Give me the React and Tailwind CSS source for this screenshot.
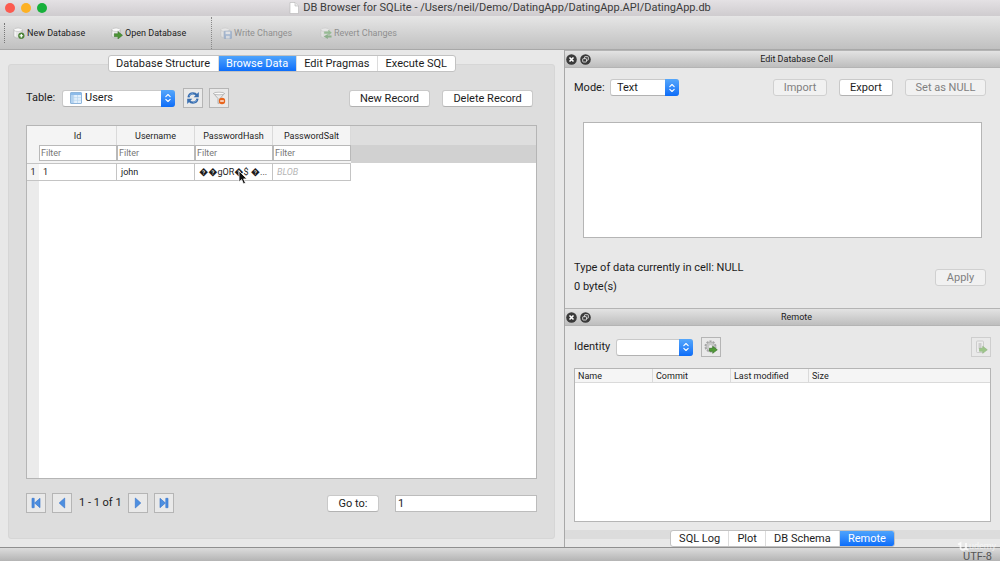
import { useState } from 'react';

const COLUMNS = ['Id', 'Username', 'PasswordHash', 'PasswordSalt'];
const REMOTE_COLUMNS = ['Name', 'Commit', 'Last modified', 'Size'];
const MAIN_TABS = ['Database Structure', 'Browse Data', 'Edit Pragmas', 'Execute SQL'];
const DOCK_TABS = ['SQL Log', 'Plot', 'DB Schema', 'Remote'];

/* ---------- Icons ---------- */

function Cylinder() {
  return (
    <>
      <path d="M1 3v7c0 1.200 2 2 4.500 2s4.500-.8 4.500-2V3" fill="#e6e6e6" stroke="#a9a9a9" strokeWidth=".6" />
      <ellipse cx="5.500" cy="3" rx="4.500" ry="1.900" fill="#fafafa" stroke="#b5b5b5" strokeWidth=".6" />
      <path d="M2.300 5v5" stroke="#fff" strokeWidth="1" />
    </>
  );
}

function ToolIcon({ kind }) {
  return (
    <svg viewBox="0 0 13 13" className="size-3 shrink-0" aria-hidden="true">
      <Cylinder />
      {kind === 'new' && (
        <>
          <circle cx="9" cy="9.500" r="3.200" fill="#4f8a3a" stroke="#3c6b2a" strokeWidth=".5" />
          <path d="M9 7.600v3.800M7.100 9.500h3.800" stroke="#fff" strokeWidth="1.300" />
        </>
      )}
      {kind === 'open' && (
        <path d="M3.500 7.200h4V4.800l5 4.200-5 4v-2.400h-4z" fill="#4c9436" stroke="#2f6b20" strokeWidth=".5" />
      )}
      {kind === 'write' && (
        <>
          <rect x="4.500" y="4.500" width="8" height="8" rx=".6" fill="#6f98d0" stroke="#4a74b0" strokeWidth=".6" />
          <rect x="6" y="5" width="5" height="2.800" fill="#f2f5fa" />
          <rect x="6.500" y="9.500" width="4" height="3" fill="#dfe7f2" />
        </>
      )}
      {kind === 'revert' && (
        <>
          <path d="M4.500 5h4.500V3l3.800 3.200L9 9.200V7.300H4.500z" fill="#4fa04a" />
          <path d="M12.500 9.200h-4V7.500L4 10.200l4.500 2.800v-1.700h4z" fill="#3f8c3c" />
        </>
      )}
    </svg>
  );
}

function RefreshIcon() {
  return (
    <svg viewBox="0 0 14 14" className="size-3.5" aria-hidden="true">
      <g fill="none" stroke="#3a6fb0" strokeWidth="2.200">
        <path d="M2.500 6.300C2.900 3.700 4.800 2.300 7 2.300c1.500 0 2.800.6 3.700 1.800" />
        <path d="M11.500 7.700c-.4 2.600-2.300 4-4.500 4-1.500 0-2.800-.6-3.700-1.800" />
      </g>
      <path d="M12.800 1v5.200H7.700zM1.200 13V7.800h5.100z" fill="#3a6fb0" />
      <path d="M3.300 5c.7-1.500 2-2.300 3.700-2.300M10.700 9c-.7 1.500-2 2.300-3.700 2.300" fill="none" stroke="#8db4e2" strokeWidth=".7" />
    </svg>
  );
}

function ClearFilterIcon() {
  return (
    <svg viewBox="0 0 14 14" className="size-3.5" aria-hidden="true">
      <path d="M1.500 2.500 6 7.500v5l2-1v-4l4.500-5z" fill="#e9e9e9" stroke="#a3a3a3" strokeWidth=".8" />
      <ellipse cx="7" cy="2.500" rx="5.500" ry="1.300" fill="#fafafa" stroke="#a8a8a8" strokeWidth=".7" />
      <circle cx="10" cy="10" r="3.200" fill="#e8651d" />
      <path d="M8.200 10h3.600" stroke="#fff" strokeWidth="1.300" />
    </svg>
  );
}

function TableIcon() {
  return (
    <svg viewBox="0 0 12 12" className="size-3" aria-hidden="true">
      <rect x=".5" y=".5" width="11" height="11" rx=".5" fill="#e3f0fc" stroke="#8fb6dc" />
      <path d="M1 1h10v2H1z" fill="#8dbbe9" />
      <path d="M1 3h2.500v8H1z" fill="#b2d2f1" />
      <path d="M3.700 3v8M7.500 3v8M1 5.600h10M1 8.300h10" stroke="#b4d1ec" strokeWidth=".6" />
    </svg>
  );
}

function NavIcon({ kind }) {
  const flip = kind === 'next' || kind === 'last';
  const bar = kind === 'first' || kind === 'last';
  return (
    <svg viewBox="0 0 12 12" className="size-3" aria-hidden="true">
      <g transform={flip ? 'translate(12 0) scale(-1 1)' : undefined} fill="#4d8fe0" stroke="#2f6ecb" strokeWidth=".6" strokeLinejoin="round">
        {bar && <rect x="2" y="1.300" width="2.200" height="9.400" />}
        {bar ? <path d="M10 1.300v9.400L4.600 6z" /> : <path d="M8.700 1v10L3.200 6z" />}
      </g>
    </svg>
  );
}

function GearArrowIcon() {
  return (
    <svg viewBox="0 0 14 14" className="size-3.5" aria-hidden="true">
      <circle cx="6.500" cy="6.500" r="5" fill="none" stroke="#a6a6a6" strokeWidth="2" strokeDasharray="2 1.140" />
      <circle cx="6.500" cy="6.500" r="4.400" fill="#c9c9c9" stroke="#a3a3a3" strokeWidth=".6" />
      <circle cx="6.500" cy="6.500" r="1.500" fill="#eee" />
      <path d="M5.500 8.300h3.200V6.300l4.600 3.500-4.600 3.500v-2H5.500z" fill="#519b37" stroke="#2f6b20" strokeWidth=".6" />
    </svg>
  );
}

function PushIcon() {
  return (
    <svg viewBox="0 0 14 14" className="size-3.5 opacity-60" aria-hidden="true">
      <rect x="2.500" y="1" width="7" height="11.500" rx="1" fill="#efefef" stroke="#a8a8a8" strokeWidth=".7" />
      <path d="M4.500 3h3v6h-3z" fill="#bdbdbd" />
      <path d="M5.500 8.300h3.200V6.300l4.600 3.500-4.600 3.500v-2H5.500z" fill="#6cb04c" stroke="#55913b" strokeWidth=".6" />
    </svg>
  );
}

/* ---------- Shared controls ---------- */

function PushButton({ children, disabled, className = '' }) {
  return (
    <button
      disabled={disabled}
      className={`h-[17px] rounded-[3px] border pt-px text-center leading-3 whitespace-nowrap ${
        disabled ? 'border-[#d0d0d0] bg-[#f1f1f1] text-[#808080]' : 'border-[#c9c9c9] border-b-[#b2b2b2] bg-white text-[#1c1c1c]'
      } ${className}`}
    >
      {children}
    </button>
  );
}

function IconButton({ label, children, disabled }) {
  return (
    <button
      aria-label={label}
      disabled={disabled}
      className={`flex size-5 shrink-0 items-center justify-center border bg-[#e9e9e9] ${disabled ? 'border-[#cecece]' : 'border-[#b5b5b5]'}`}
    >
      {children}
    </button>
  );
}

function PopUp({ id, options, icon, className = '' }) {
  return (
    <div className={`relative h-[17px] ${className}`}>
      <select
        id={id}
        className={`block size-full appearance-none rounded-[3px] border border-[#c9c9c9] border-b-[#b2b2b2] bg-white leading-3 text-[#1c1c1c] ${icon ? 'pl-[22px]' : 'pl-1.5'}`}
      >
        {options.map((o) => (
          <option key={o}>{o}</option>
        ))}
      </select>
      {icon && <span className="pointer-events-none absolute top-0.5 left-2">{icon}</span>}
      <span className="pointer-events-none absolute inset-y-0 right-0 flex w-3.5 items-center justify-center rounded-r-[3px] bg-linear-to-b from-[#55a7fb] to-[#0a6cf8]">
        <svg viewBox="0 0 8 10" className="h-2.5 w-2" fill="none" stroke="#fff" strokeWidth="1.100" strokeLinecap="round" strokeLinejoin="round">
          <path d="M1.800 3.700 4 1.500l2.200 2.200M1.800 6.300 4 8.500l2.200-2.200" />
        </svg>
      </span>
    </div>
  );
}

function TabBar({ tabs, active, onChange, className = '' }) {
  return (
    <div role="tablist" className={`flex h-[17px] overflow-hidden rounded-[3px] border border-[#c2c2c2] bg-white ${className}`}>
      {tabs.map((t) => (
        <button
          key={t}
          role="tab"
          aria-selected={t === active}
          onClick={() => onChange(t)}
          className={`flex-auto border-r border-[#dcdcdc] pt-px leading-3 whitespace-nowrap last:border-r-0 ${
            t === active ? 'bg-linear-to-b from-[#4da3fc] to-[#0b6dfa] text-white' : 'text-[#1c1c1c]'
          }`}
        >
          {t}
        </button>
      ))}
    </div>
  );
}

function DockHeader({ title }) {
  return (
    <div className="flex h-[18px] shrink-0 items-center border-y border-[#b4b4b4] bg-linear-to-b from-[#e3e3e3] to-[#bebebe] px-px text-[9px]">
      <div className="flex w-7 gap-[3px]">
        <button aria-label={`Close ${title}`}>
          <svg viewBox="0 0 11 11" className="size-[11px]">
            <circle cx="5.500" cy="5.500" r="5.300" fill="#3a3a3a" />
            <path d="M3.500 3.500l4 4M7.500 3.500l-4 4" stroke="#fff" strokeWidth="1.600" />
          </svg>
        </button>
        <button aria-label={`Float ${title}`}>
          <svg viewBox="0 0 11 11" className="size-[11px]">
            <circle cx="5.500" cy="5.500" r="5.300" fill="#3a3a3a" />
            <g fill="#3a3a3a" stroke="#e2e2e2" strokeWidth=".9">
              <rect x="4.500" y="2.700" width="3.800" height="3.500" rx=".5" />
              <rect x="2.700" y="4.700" width="3.800" height="3.300" rx=".5" />
            </g>
          </svg>
        </button>
      </div>
      <h2 className="flex-1 pt-0.5 text-center">{title}</h2>
    </div>
  );
}

/* ---------- Window parts ---------- */

function TitleBar() {
  return (
    <header className="flex h-4 shrink-0 items-center bg-linear-to-b from-[#e4e1e4] to-[#cfcccf] px-[5px]">
      <div className="flex w-14 gap-1.5">
        <button aria-label="Close" className="size-2.5 rounded-full bg-[#fc5b50]" />
        <button aria-label="Minimize" className="size-2.5 rounded-full bg-[#fdb124]" />
        <button aria-label="Zoom" className="size-2.5 rounded-full bg-[#17b03b]" />
      </div>
      <h1 className="flex flex-1 items-center justify-center gap-1 pr-14 text-[11px] leading-4 text-[#3b3b3b]">
        <svg viewBox="0 0 10 12" className="h-3 w-2.5" aria-hidden="true">
          <path d="M1 .5h5L9.500 4v7.500H1z" fill="#fff" stroke="#b5b5b5" strokeWidth=".6" />
          <path d="M6 .5V4h3.500" fill="#ececec" stroke="#b5b5b5" strokeWidth=".6" />
        </svg>
        DB Browser for SQLite - /Users/neil/Demo/DatingApp/DatingApp.API/DatingApp.db
      </h1>
    </header>
  );
}

function ToolButton({ kind, label, disabled, className = '' }) {
  return (
    <button disabled={disabled} className={`flex items-center gap-0.5 whitespace-nowrap ${disabled ? 'text-[#3c3c3c] opacity-45' : ''} ${className}`}>
      <ToolIcon kind={kind} />
      <span className="pt-0.5">{label}</span>
    </button>
  );
}

function Toolbar() {
  return (
    <div className="flex h-[34px] shrink-0 items-center border-b border-[#a8a8a8] bg-linear-to-b from-[#e6e6e6] to-[#c0c0c0] pl-1 text-[9px]">
      <span className="mr-2 h-5 border-l border-dotted border-[#777]" />
      <ToolButton kind="new" label="New Database" className="w-[98px]" />
      <ToolButton kind="open" label="Open Database" className="w-[100px]" />
      <span className="mr-2 h-8 border-l border-dotted border-[#888]" />
      <ToolButton kind="write" label="Write Changes" disabled className="w-[100px]" />
      <ToolButton kind="revert" label="Revert Changes" disabled />
    </div>
  );
}

function DataGrid() {
  return (
    <div className="flex min-h-0 flex-1 flex-col border border-[#b5b5b5] bg-white text-[9px]">
      <table className="w-full table-fixed border-separate border-spacing-0">
        <colgroup>
          <col className="w-3" />
          {COLUMNS.map((c) => (
            <col key={c} className="w-[78px]" />
          ))}
          <col />
        </colgroup>
        <thead>
          <tr className="h-[19px] bg-[#f4f4f4]">
            <th />
            {COLUMNS.map((c) => (
              <th key={c} scope="col" className="border-r border-[#dadada] p-0 pt-[3px] font-normal">{c}</th>
            ))}
            <td className="bg-[#dedede]" />
          </tr>
          <tr className="h-[18px] bg-[#f4f4f4]">
            <td />
            {COLUMNS.map((c) => (
              <td key={c} className="p-0 align-top">
                <input
                  aria-label={`Filter ${c}`}
                  placeholder="Filter"
                  className="block h-4 w-full border border-[#b9b9b9] bg-white px-px leading-3 placeholder:text-[#777]"
                />
              </td>
            ))}
            <td className="bg-[#d1d1d1]" />
          </tr>
        </thead>
        <tbody>
          <tr className="h-[18px]">
            <th scope="row" className="border-y border-[#c4c4c4] bg-[#f4f4f4] p-0 pt-0.5 font-normal">1</th>
            <td className="border-y border-r border-[#c4c4c4] p-0 pt-0.5 pl-1">1</td>
            <td className="border-y border-r border-[#c4c4c4] p-0 pt-0.5 pl-1">john</td>
            <td className="border-y border-r border-[#c4c4c4] p-0 pt-0.5 pl-1 whitespace-nowrap">��gOR�$ �...</td>
            <td className="border-y border-r border-[#c4c4c4] p-0 pt-0.5 pl-1 text-[#b5b5b5] italic">BLOB</td>
            <td />
          </tr>
        </tbody>
      </table>
      <div className="w-3 flex-1 bg-[#ebebeb]" />
    </div>
  );
}

function BrowsePane() {
  const [tab, setTab] = useState('Browse Data');
  return (
    <main className="flex min-h-0 flex-col pt-[5px] pr-[9px] pb-2 pl-2">
      <TabBar tabs={MAIN_TABS} active={tab} onChange={setTab} className="z-10 w-[348px] shrink-0 self-center" />
      <section className="-mt-2 flex min-h-0 flex-1 flex-col rounded-[3px] border border-[#d6d6d6] bg-[#dddddd] px-[17px] pt-[23px] pb-[25px]">
        <div className="mb-[17px] flex items-center">
          <label htmlFor="table" className="w-9 pt-px">Table:</label>
          <PopUp id="table" options={['Users']} icon={<TableIcon />} className="mr-2 w-[113px]" />
          <div className="flex gap-1.5">
            <IconButton label="Refresh"><RefreshIcon /></IconButton>
            <IconButton label="Clear filters"><ClearFilterIcon /></IconButton>
          </div>
          <div className="mr-1 ml-auto flex gap-3">
            <PushButton className="w-[81px]">New Record</PushButton>
            <PushButton className="w-[91px]">Delete Record</PushButton>
          </div>
        </div>
        <DataGrid />
        <div className="mt-3.5 flex items-center">
          <div className="flex items-center gap-1.5">
            <IconButton label="First page"><NavIcon kind="first" /></IconButton>
            <IconButton label="Previous page"><NavIcon kind="prev" /></IconButton>
            <span className="pt-px pl-px">1 - 1 of 1</span>
            <IconButton label="Next page"><NavIcon kind="next" /></IconButton>
            <IconButton label="Last page"><NavIcon kind="last" /></IconButton>
          </div>
          <PushButton className="mr-4 ml-auto w-[52px]">Go to:</PushButton>
          <input aria-label="Row number" defaultValue="1" className="h-[17px] w-[142px] border border-[#bcbcbc] bg-white px-0.5" />
        </div>
      </section>
    </main>
  );
}

function EditCellDock() {
  return (
    <section className="flex min-h-0 flex-[258] flex-col">
      <DockHeader title="Edit Database Cell" />
      <div className="flex min-h-0 flex-1 flex-col pt-[11px] pr-3.5 pb-3 pl-[9px]">
        <div className="flex items-center">
          <label htmlFor="mode" className="w-9 pt-px">Mode:</label>
          <PopUp id="mode" options={['Text']} className="w-[69px]" />
          <div className="ml-auto flex gap-3">
            <PushButton disabled className="w-[54px]">Import</PushButton>
            <PushButton className="w-[54px]">Export</PushButton>
            <PushButton disabled className="w-[81px]">Set as NULL</PushButton>
          </div>
        </div>
        <textarea aria-label="Cell content" className="mt-[25px] mr-1 mb-5 ml-[9px] min-h-0 flex-1 resize-none border border-[#b5b5b5] bg-white p-1" />
        <div className="flex items-center justify-between">
          <div className="leading-[19px]">
            <p>Type of data currently in cell: NULL</p>
            <p>0 byte(s)</p>
          </div>
          <PushButton disabled className="w-[51px]">Apply</PushButton>
        </div>
      </div>
    </section>
  );
}

function RemoteDock() {
  const [tab, setTab] = useState('Remote');
  return (
    <section className="flex min-h-0 flex-[239] flex-col">
      <DockHeader title="Remote" />
      <div className="flex min-h-0 flex-1 flex-col px-[9px] pt-[11px] pb-2">
        <div className="mb-[11px] flex items-center">
          <label htmlFor="identity" className="w-[42px] pt-px">Identity</label>
          <PopUp id="identity" options={['']} className="mr-2 w-[77px]" />
          <IconButton label="Import certificate"><GearArrowIcon /></IconButton>
          <div className="ml-auto">
            <IconButton label="Push database" disabled><PushIcon /></IconButton>
          </div>
        </div>
        <div className="min-h-0 flex-1 border border-[#b5b5b5] bg-white">
          <table className="w-full table-fixed border-separate border-spacing-0 text-[9px]">
            <thead>
              <tr className="h-[14px] bg-[#f5f5f5] text-left leading-3">
                {REMOTE_COLUMNS.map((c) => (
                  <th key={c} scope="col" className="w-[78px] border-r border-b border-[#dadada] p-0 pl-[3px] font-normal last:w-auto last:border-r-0">{c}</th>
                ))}
              </tr>
            </thead>
          </table>
        </div>
      </div>
      <div className="flex justify-center bg-linear-to-b from-[#dcdcdc] from-50% to-[#e8e8e8] to-50%">
        <TabBar tabs={DOCK_TABS} active={tab} onChange={setTab} className="w-[225px]" />
      </div>
    </section>
  );
}

function StatusBar() {
  return (
    <footer className="relative flex h-3.5 shrink-0 items-center justify-end border-t border-[#8f8f8f] bg-linear-to-b from-[#dcdcdc] to-[#b4b4b4] pr-2 text-[#555]">
      <span className="pt-1 leading-3">UTF-8</span>
      <span className="absolute -top-2 right-1 flex items-center text-[9px] leading-[10px] text-white/60">
        <svg viewBox="0 0 12 12" className="size-3" fill="none" stroke="#fff" strokeOpacity=".8" strokeWidth="1.800" aria-hidden="true">
          <path d="M1 4.500 3.500 3v4.500c0 3.500 5 3 5.500-.5V3M9 7c0 2 .8 3 2.500 2.500" />
        </svg>
        udemy
      </span>
    </footer>
  );
}

export default function App() {
  return (
    <div className="relative flex h-screen flex-col overflow-hidden bg-[#e8e8e8] font-['Roboto',sans-serif] text-[11px] text-[#1c1c1c]">
      <TitleBar />
      <Toolbar />
      <div className="grid min-h-0 flex-1 grid-cols-[564fr_436fr] grid-rows-[minmax(0,1fr)]">
        <BrowsePane />
        <aside className="flex min-h-0 flex-col border-l border-[#a8a8a8]">
          <EditCellDock />
          <RemoteDock />
        </aside>
      </div>
      <StatusBar />

      {/* Mouse pointer */}
      <svg viewBox="0 0 10 15" className="pointer-events-none absolute top-[170px] left-[238px] h-[15px] w-2.5" aria-hidden="true">
        <path d="M1 1v11l2.600-2.400L5.500 14l2-.9-1.900-4.200H9z" fill="#111" stroke="#fff" strokeWidth=".8" />
      </svg>
    </div>
  );
}
